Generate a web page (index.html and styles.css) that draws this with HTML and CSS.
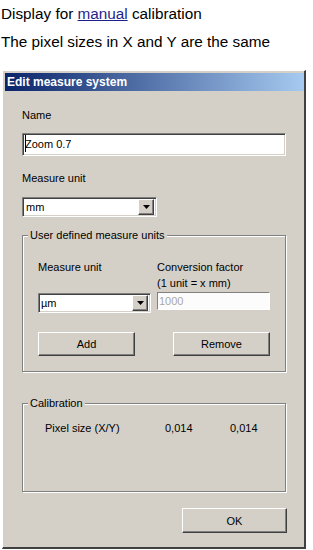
FILE: index.html
```html
<!DOCTYPE html>
<html>
<head>
<title>Edit measure system</title>
<meta name="viewport" content="width=device-width, initial-scale=1.0">
<link rel="stylesheet" href="styles.css">
</head>
<body>

<div class="intro">
  <p>Display for <a href="#">manual</a> calibration</p>
  <p>The pixel sizes in X and Y are the same</p>
</div>

<div class="dialog">
  <div class="titlebar">Edit measure system</div>

  <div class="dialog-body">
    <div class="label name-label">Name</div>
    <div class="textbox name-box"><span class="caret"></span>Zoom 0.7</div>

    <div class="label unit-label">Measure unit</div>
    <div class="combo unit-combo">
      <span class="combo-text">mm</span>
      <span class="combo-btn">
        <svg width="7" height="4" viewBox="0 0 7 4"><path d="M0 0h7L3.5 4z" fill="#000"/></svg>
      </span>
    </div>

    <!-- user defined units -->
    <div class="group user-group">
      <div class="group-title">User defined measure units</div>
      <div class="units-grid">
        <div class="label2">Measure unit</div>
        <div class="label2">Conversion factor<br>(1 unit = x mm)</div>
        <div class="combo small-combo">
          <span class="combo-text">µm</span>
          <span class="combo-btn">
            <svg width="7" height="4" viewBox="0 0 7 4"><path d="M0 0h7L3.5 4z" fill="#000"/></svg>
          </span>
        </div>
        <div class="factor-box">1000</div>
        <button class="button add-btn">Add</button>
        <button class="button remove-btn">Remove</button>
      </div>
    </div>

    <!-- calibration -->
    <div class="group calib-group">
      <div class="group-title">Calibration</div>
      <div class="calib-row">
        <span>Pixel size (X/Y)</span>
        <span>0,014</span>
        <span>0,014</span>
      </div>
    </div>

    <div class="footer">
      <button class="button ok-btn">OK</button>
    </div>
  </div>
</div>

</body>
</html>
```

FILE: styles.css
```css
body {
  margin: 0;
  background-color: #ffffff;
  color: #000000;
  font-family: "Liberation Sans", Arial, sans-serif;
}
.intro {
  padding: 5px 0 0 1px;
}
.intro p {
  margin: 0 0 10px;
  font-size: 15.3px;
  line-height: 18px;
}
.intro p:last-child {
  margin-bottom: 0;
}
.intro a {
  color: #1f1f8c;
}

/* window frame */
.dialog {
  margin: 19px 0 0 2px;
  width: 304px;
  box-sizing: border-box;
  background-color: #d4d0c8;
  border-top: 1px solid #ffffff;
  border-left: 1px solid #ffffff;
  border-right: 2px solid #404040;
  border-bottom: 2px solid #404040;
  padding: 2px 0 0 2px;
  font-size: 11px;
}
.titlebar {
  height: 18px;
  line-height: 18px;
  padding-left: 2px;
  font-size: 12px;
  font-weight: bold;
  color: #ffffff;
  background: linear-gradient(to right, #0a246a, #a6caf0);
}
.dialog-body {
  padding: 18px 18px 14px 17px;
}
.label {
  line-height: 13px;
}
.unit-label {
  margin-top: 16px;
}

/* sunken controls */
.textbox {
  box-sizing: border-box;
  background-color: #ffffff;
  border: 1px solid;
  border-color: #808080 #ffffff #ffffff #808080;
  box-shadow: inset 1px 1px #404040, inset -1px -1px #d4d0c8;
}
.name-box {
  margin-top: 11px;
  height: 23px;
  padding: 1px 3px 0 2px;
  line-height: 13px;
  white-space: nowrap;
}
.caret {
  display: inline-block;
  width: 1px;
  height: 17px;
  margin: 0 -1px -4px 0;
  vertical-align: baseline;
  background-color: #000000;
}
.combo {
  box-sizing: border-box;
  display: flex;
  align-items: center;
  height: 20px;
  background-color: #ffffff;
  border: 1px solid;
  border-color: #808080 #ffffff #ffffff #808080;
  box-shadow: inset 1px 1px #404040, inset -1px -1px #d4d0c8;
  padding: 1px;
}
.unit-combo {
  margin-top: 12px;
  width: 135px;
}
.combo-text {
  flex: 1;
  padding-left: 2px;
  line-height: 16px;
}
.combo-btn {
  box-sizing: border-box;
  display: flex;
  align-items: center;
  justify-content: center;
  width: 16px;
  height: 16px;
  margin-right: 1px;
  background-color: #d4d0c8;
  border: 1px solid;
  border-color: #ffffff #404040 #404040 #ffffff;
  box-shadow: inset -1px -1px #808080;
}

/* etched group boxes */
.group {
  border: 1px solid #808080;
  box-shadow: inset 1px 1px #ffffff, 1px 1px #ffffff;
}
.group-title {
  width: fit-content;
  margin: -7px 0 0 5px;
  padding: 0 2px;
  line-height: 13px;
  background-color: #d4d0c8;
}
.user-group {
  margin-top: 18px;
}
.units-grid {
  display: grid;
  grid-template-columns: 113px 113px;
  column-gap: 6px;
  align-items: start;
  padding: 17px 15px 15px 15px;
}
.label2 {
  line-height: 16px;
}
.small-combo {
  margin-top: 2px;
}
.small-combo .combo-text {
  padding-left: 1px;
}
.factor-box {
  box-sizing: border-box;
  margin-top: 1px;
  height: 18px;
  padding-left: 1px;
  line-height: 16px;
  color: #a8a8a8;
  background-color: #fcfcfc;
  border: 1px solid;
  border-color: #808080 #ffffff #ffffff #808080;
}
.button {
  box-sizing: border-box;
  height: 24px;
  width: 97px;
  margin: 19px 0 0;
  padding: 0;
  font-family: inherit;
  font-size: 11px;
  color: #000000;
  background-color: #d4d0c8;
  border: 1px solid;
  border-color: #ffffff #404040 #404040 #ffffff;
  box-shadow: inset -1px -1px #808080;
}
.remove-btn {
  justify-self: end;
}
.calib-group {
  margin-top: 31px;
}
.calib-row {
  display: grid;
  grid-template-columns: 120px 65px auto;
  padding: 10px 0 55px 22px;
  line-height: 16px;
}
.footer {
  display: flex;
  justify-content: flex-end;
  margin-top: 16px;
}
.ok-btn {
  margin: 0 -1px 0 0;
  width: 105px;
  height: 25px;
}
```
